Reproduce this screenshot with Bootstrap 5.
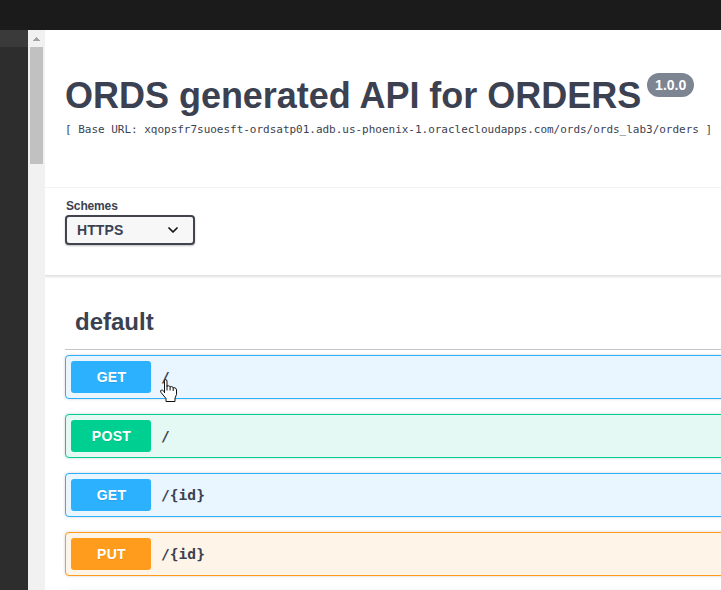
<!DOCTYPE html>
<html lang="en">
<head>
<meta charset="utf-8">
<title>ORDS generated API for ORDERS</title>
<link rel="stylesheet" href="https://cdn.jsdelivr.net/npm/bootstrap@5.3.0/dist/css/bootstrap.min.css">
<style>
body { font-family: "Liberation Sans", Arial, sans-serif; color: #3b4151; width: 721px; height: 590px; }
.topbar { height: 30px; background: #1b1b1b; }
.side { width: 28px; background: #2d2d2d; }
.side-head { height: 17px; background: #3a3a3a; }
.track { width: 17px; background: #f1f1f1; }
.arrow { width: 17px; height: 17px; }
.thumb { width: 13px; height: 117px; margin-left: 2px; background: #c1c1c1; }
.info { height: 158px; padding: 43px 0 0 20px; border-bottom: 1px solid #f5f5f5; }
.info h1 { font-size: 36px; line-height: 46px; letter-spacing: -.02px; }
.version { width: 47px; height: 24px; margin-left: 6px; background: #7d8492; color: #fff; border-radius: 12px; font-size: 14px; }
.base-url { font: 11px/16px "DejaVu Sans Mono", monospace; letter-spacing: -.02px; margin-top: 3px; }
.schemes { height: 88px; padding: 10px 0 0 20px; box-shadow: 0 1px 2px rgba(0,0,0,.12); border-bottom: 1px solid #e2e2e2; }
.schemes label { font-size: 12px; line-height: 17px; margin-left: 1px; letter-spacing: -.15px; }
.scheme-box { width: 130px; height: 30px; padding: 0 15px 0 10px; border: 2px solid #41444e; border-radius: 4px; background: #f7f7f7; box-shadow: 0 1px 2px rgba(0,0,0,.25); font-size: 14px; letter-spacing: .1px; }
.ops { padding-left: 20px; }
.tag-title { height: 74px; padding: 28px 0 0 10px; border-bottom: 1px solid #c4c6cb; font-size: 24px; line-height: 36px; margin-bottom: 5px; }
.op { height: 44px; width: 700px; margin-bottom: 15px; padding-left: 5px; border: 1px solid; border-radius: 4px; box-shadow: 0 0 3px rgba(0,0,0,.19); }
.method { width: 80px; height: 32px; padding-left: 1px; border-radius: 3px; color: #fff; font-size: 14px; text-shadow: 0 1px 0 rgba(0,0,0,.1); letter-spacing: .3px; }
.op-path { font: bold 14.6px/20px "DejaVu Sans Mono", monospace; margin-left: 10px; }
.op-get { border-color: #2cb1ff; background: #e9f6ff; } .op-get .method { background: #2cb1ff; }
.op-post { border-color: #00cf92; background: #e4f9f3; } .op-post .method { background: #00cf92; }
.op-put { border-color: #ff9c1e; background: #fff4e8; } .op-put .method { background: #ff9c1e; }
.op-delete { border-color: #f93e3e; background: #feebeb; } .op-delete .method { background: #f93e3e; }
.pointer { left: 160px; top: 379px; }
</style>
</head>
<body class="d-flex flex-column overflow-hidden position-relative">
<header class="topbar flex-shrink-0"></header>
<div class="d-flex flex-grow-1 overflow-hidden">
  <aside class="side flex-shrink-0"><div class="side-head"></div></aside>
  <div class="track flex-shrink-0">
    <svg class="arrow d-block" viewBox="0 0 17 17" shape-rendering="crispEdges" fill="#a3a3a3"><path d="M8 7h1v1h1v1h1v1h1v1H5v-1h1V9h1V8h1z"/></svg>
    <div class="thumb"></div>
  </div>
  <main class="flex-grow-1 overflow-hidden bg-white">
    <section class="info">
      <div class="d-flex align-items-start text-nowrap">
        <h1 class="fw-bold mb-0">ORDS generated API for ORDERS</h1>
        <span class="version d-flex align-items-center justify-content-center fw-bold">1.0.0</span>
      </div>
      <div class="base-url text-nowrap">[ Base URL: xqopsfr7suoesft-ordsatp01.adb.us-phoenix-1.oraclecloudapps.com/ords/ords_lab3/orders ]</div>
    </section>
    <section class="schemes">
      <label class="d-block fw-bold">Schemes</label>
      <div class="scheme-box d-flex align-items-center justify-content-between fw-bold">HTTPS
        <svg width="10" height="6" viewBox="0 0 10 6" fill="none" stroke="#111" stroke-width="1.7" stroke-linecap="round" stroke-linejoin="round"><path d="M1 1l4 4 4-4"/></svg>
      </div>
    </section>
    <section class="ops">
      <h2 class="tag-title fw-bold">default</h2>
      <div class="op op-get d-flex align-items-center"><span class="method d-flex align-items-center justify-content-center fw-bold">GET</span><span class="op-path">/</span></div>
      <div class="op op-post d-flex align-items-center"><span class="method d-flex align-items-center justify-content-center fw-bold">POST</span><span class="op-path">/</span></div>
      <div class="op op-get d-flex align-items-center"><span class="method d-flex align-items-center justify-content-center fw-bold">GET</span><span class="op-path">/{id}</span></div>
      <div class="op op-put d-flex align-items-center"><span class="method d-flex align-items-center justify-content-center fw-bold">PUT</span><span class="op-path">/{id}</span></div>
      <div class="op op-delete"></div>
    </section>
  </main>
</div>
<svg class="pointer position-absolute" width="19" height="24" viewBox="0 0 19 24" fill="#fff" stroke="#111" stroke-width="1" stroke-linejoin="round">
  <path d="M4.500 14V2.200q0-1.700 1.200-1.700t1.300 1.700V7.500q.6-.9 1.700-.7 1.200.1 1.400 1.200.6-.6 1.700-.4 1.200.2 1.400 1.400.8-.6 1.800-.1 1.500.5 1.500 2.100V15.500l-1.500 3.500v3.500H6v-3L1 13.500q-1-2 .3-2.500 1.200-.3 3.200 2"/>
  <path d="M7 6.500v5M10.100 8V11.500M13.200 9V12" fill="none"/>
</svg>
<script src="https://cdn.jsdelivr.net/npm/bootstrap@5.3.0/dist/js/bootstrap.bundle.min.js"></script>
</body>
</html>
